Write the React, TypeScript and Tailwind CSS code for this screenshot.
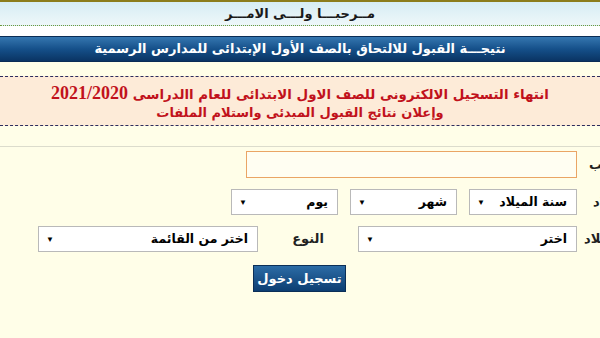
const ar = { fontFamily: '"DejaVu Sans", sans-serif' }
const red = { fontFamily: '"Liberation Serif", "DejaVu Sans", serif' }

function Drop({ text, w }: { text: string; w: string }) {
  return (
    <div className={`${w} h-[26px] bg-white border border-[#b9b9b9] flex items-center justify-between pl-[7px] pr-[9px]`}>
      <span className="text-[8px] text-black leading-none">▼</span>
      <span dir="rtl" className="text-[12.5px] text-black font-bold whitespace-nowrap" style={ar}>{text}</span>
    </div>
  )
}

// labels run past the right edge of the window, only their ends show
function Label({ text, pl }: { text: string; pl: string }) {
  return (
    <div className={`w-[23px] shrink-0 overflow-hidden flex justify-start ${pl}`}>
      <span dir="rtl" className="shrink-0 whitespace-nowrap text-[13px] font-bold text-[#222]" style={ar}>{text}</span>
    </div>
  )
}

export default function App() {
  return (
    <div className="w-[600px] h-[338px] overflow-hidden bg-[#fffee8] flex flex-col">
      {/* welcome band */}
      <div className="h-[2px] bg-[#8c7d1c]" />
      <div className="h-[24px] bg-gradient-to-b from-[#d6edf4] to-[#eef7f9] border-b border-dotted border-[#6f9a3c] flex items-center justify-center">
        <span dir="rtl" className="text-[13px] font-bold text-[#1a1a1a]" style={ar}>مــرحبـــا ولـــى الامـــر</span>
      </div>
      <div className="h-[10px] bg-white" />
      <div className="h-[26px] bg-gradient-to-b from-[#3577b0] via-[#15508a] to-[#0a3463] border-y border-[#0a2d55] flex items-center justify-center">
        <span dir="rtl" className="text-[13px] font-bold text-white" style={ar}>نتيجـــة القبول للالتحاق بالصف الأول الإبتدائى للمدارس الرسمية</span>
      </div>

      {/* notice */}
      <div className="mt-[14px] h-[50px] bg-[#fdebd8] border-y border-dashed border-[#2c2c5e] flex flex-col items-center justify-center pt-[3px] leading-[18px]">
        <span dir="rtl" className="font-bold text-[#c1121c]" style={red}>
          <span className="text-[13.4px]" style={ar}>انتهاء التسجيل الالكترونى للصف الاول الابتدائى للعام االدراسى </span>
          <span className="text-[18px]">2021/2020</span>
        </span>
        <span dir="rtl" className="text-[13px] font-bold text-[#c1121c]" style={ar}>وإعلان نتائج القبول المبدئى واستلام الملفات</span>
      </div>

      {/* form */}
      <div className="mt-[20px] border-t border-[#dcdccc] pt-[4px] flex flex-col gap-[11px]">
        <div className="flex items-center justify-end">
          <div className="w-[331px] h-[27px] border border-[#eaa565] bg-[#fffef2]" />
          <Label text="الرقم القومى للطالب" pl="pl-[12px]" />
        </div>
        <div className="flex items-center justify-end">
          <div className="flex items-center gap-[12px]">
            <Drop text="يوم" w="w-[107px]" />
            <Drop text="شهر" w="w-[107px]" />
            <Drop text="سنة الميلاد" w="w-[108px]" />
          </div>
          <Label text="تاريخ الميلاد" pl="pl-[16px]" />
        </div>
        <div className="flex items-center">
          <div className="w-[38px]" />
          <Drop text="اختر من القائمة" w="w-[220px]" />
          <div className="flex-1 flex justify-center">
            <span dir="rtl" className="text-[13px] font-bold text-[#222]" style={ar}>النوع</span>
          </div>
          <Drop text="اختر" w="w-[219px]" />
          <Label text="محافظة الميلاد" pl="pl-[7px]" />
        </div>
        <div className="flex justify-center pt-[2px]">
          <button className="ml-[-1px] w-[93px] h-[27px] bg-gradient-to-b from-[#2c6ca6] to-[#0d3e72] border border-[#0b2f57] text-white text-[13px] font-bold" style={ar}>
            تسجيل دخول
          </button>
        </div>
      </div>
    </div>
  )
}
